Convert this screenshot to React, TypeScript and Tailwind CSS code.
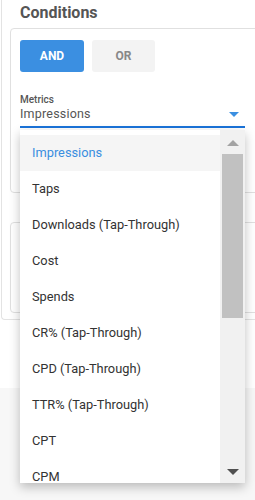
const metrics = [
  "Impressions",
  "Taps",
  "Downloads (Tap-Through)",
  "Cost",
  "Spends",
  "CR% (Tap-Through)",
  "CPD (Tap-Through)",
  "TTR% (Tap-Through)",
  "CPT",
  "CPM",
];

export default function App() {
  return (
    <div className="relative min-h-[500px] overflow-hidden bg-[#f7f7f7] font-['Roboto',sans-serif]">
      <div className="bg-white pb-[68px]">
        <div className="ml-px w-[300px] rounded-bl border-b border-l border-[#e3e3e3] bg-white pb-[6px] pl-[8px] pt-[3px]">
          <h2 className="pl-[10px] text-[16px] font-bold leading-[20px] text-[#555]">Conditions</h2>

          <div className="mt-[5px] h-[165px] rounded border border-[#e0e0e0] bg-white pl-[9px] pt-[11px]">
            <div className="flex gap-2">
              <button className="h-8 w-16 rounded-[3px] bg-[#3b8fe1] text-[12px] font-bold text-white">AND</button>
              <button className="h-8 w-[63px] rounded-[3px] bg-[#f3f3f3] text-[12px] font-bold text-[#888]">OR</button>
            </div>
            <div className="mt-[22px] w-[225px] border-b-2 border-[#1a73d9]">
              <div className="text-[10px] font-medium leading-[12px] text-[#555]">Metrics</div>
              <div className="flex items-center justify-between pb-[4px] pr-[6px]">
                <span className="text-[12.5px] leading-[16px] tracking-[0.2px] text-[#555]">Impressions</span>
                <span className="h-0 w-0 border-x-[5px] border-t-[5px] border-x-transparent border-t-[#3b8fe1]" />
              </div>
            </div>
          </div>

          <div className="mt-[29px] h-[91px] rounded border border-[#e0e0e0] bg-white" />
        </div>
      </div>

      <div className="absolute left-[20px] top-[130px] flex h-[353px] w-[225px] bg-white shadow-[0_4px_10px_rgba(0,0,0,0.25)]">
        <ul className="flex-1 overflow-hidden pt-[5px]">
          {metrics.map((m, i) => (
            <li
              key={m}
              className={`flex h-9 items-center pl-3 text-[12.8px] ${
                i === 0 ? "bg-[#f5f5f5] text-[#3a8ee0]" : "text-[#333]"
              }`}
            >
              {m}
            </li>
          ))}
        </ul>
        <div className="relative w-[25px] bg-[#f1f1f1]">
          <span className="absolute left-[7px] top-[10px] h-0 w-0 border-x-[6px] border-b-[6px] border-x-transparent border-b-[#a3a3a3]" />
          <div className="absolute left-[2px] right-[2px] top-[24px] h-[164px] bg-[#c1c1c1]" />
          <span className="absolute left-[7px] top-[339px] h-0 w-0 border-x-[6px] border-t-[6px] border-x-transparent border-t-[#505050]" />
        </div>
      </div>
    </div>
  );
}
